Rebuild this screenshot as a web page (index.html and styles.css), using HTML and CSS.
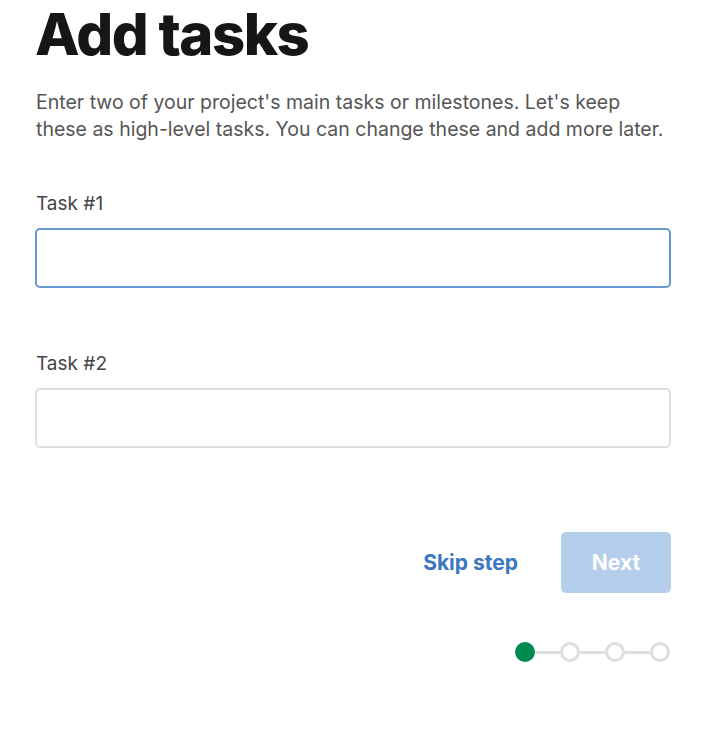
FILE: index.html
```html
<!DOCTYPE html>
<html>
<head>
<meta charset="utf-8">
<link rel="stylesheet" href="styles.css">
</head>
<body>
<main class="page">
  <h1 class="title">Add tasks</h1>
  <p class="intro">Enter two of your project's main tasks or milestones. Let's keep<br>these as high-level tasks. You can change these and add more later.</p>
  <div class="field">
    <label class="label" for="t1">Task #1</label>
    <input class="input input-focus" id="t1" type="text">
  </div>
  <div class="field field-2">
    <label class="label" for="t2">Task #2</label>
    <input class="input" id="t2" type="text">
  </div>
  <div class="actions">
    <button class="skip" type="button">Skip step</button>
    <button class="next" type="button" disabled>Next</button>
  </div>
  <div class="stepper">
    <span class="dot dot-active"></span>
    <span class="line"></span>
    <span class="dot"></span>
    <span class="line"></span>
    <span class="dot"></span>
    <span class="line"></span>
    <span class="dot"></span>
  </div>
</main>
</body>
</html>
```
FILE: styles.css
```css
html, body {
  margin: 0;
  padding: 0;
  background: #fff;
}
.page {
  width: 636px;
  padding: 0 0 0 35px;
  font-family: Inter, "Noto Sans", sans-serif;
}
.title {
  margin: 0;
  padding-top: 2px;
  font-family: Inter, sans-serif;
  font-weight: 800;
  font-size: 58px;
  line-height: 64px;
  color: #161616;
  letter-spacing: -1.5px;
}
.intro {
  margin: 23px -20px 0 1px;
  font-size: 19.5px;
  line-height: 27px;
  color: #555;
}
.field {
  margin-top: 49px;
  display: flex;
  flex-direction: column;
}
.field-2 {
  margin-top: 64px;
}
.label {
  font-size: 19px;
  line-height: 24px;
  color: #444;
  margin-left: 1px;
  margin-bottom: 12px;
}
.input {
  box-sizing: border-box;
  width: 636px;
  height: 60px;
  border: 2px solid #dedede;
  border-radius: 5px;
  outline: none;
  background: #fff;
  font-size: 17px;
  padding: 0 14px;
}
.input-focus {
  border-color: #6699d2;
}
.actions {
  margin-top: 84px;
  display: flex;
  justify-content: flex-end;
  align-items: center;
  gap: 43px;
}
.skip {
  background: none;
  border: none;
  padding: 0;
  font-family: Inter, sans-serif;
  font-weight: 700;
  font-size: 21px;
  color: #3a78c0;
  cursor: pointer;
}
.next {
  width: 110px;
  height: 61px;
  border: none;
  border-radius: 5px;
  background: #b3cdea;
  color: #fff;
  font-family: Inter, sans-serif;
  font-weight: 700;
  font-size: 21px;
}
.stepper {
  margin-top: 49px;
  display: flex;
  justify-content: flex-end;
  align-items: center;
  padding-right: 1px;
}
.dot {
  box-sizing: border-box;
  width: 20px;
  height: 20px;
  border-radius: 50%;
  border: 3px solid #dedede;
  background: #fff;
}
.dot-active {
  background: #008a50;
  border-color: #008a50;
}
.line {
  width: 25px;
  height: 3px;
  background: #dedede;
}
```
